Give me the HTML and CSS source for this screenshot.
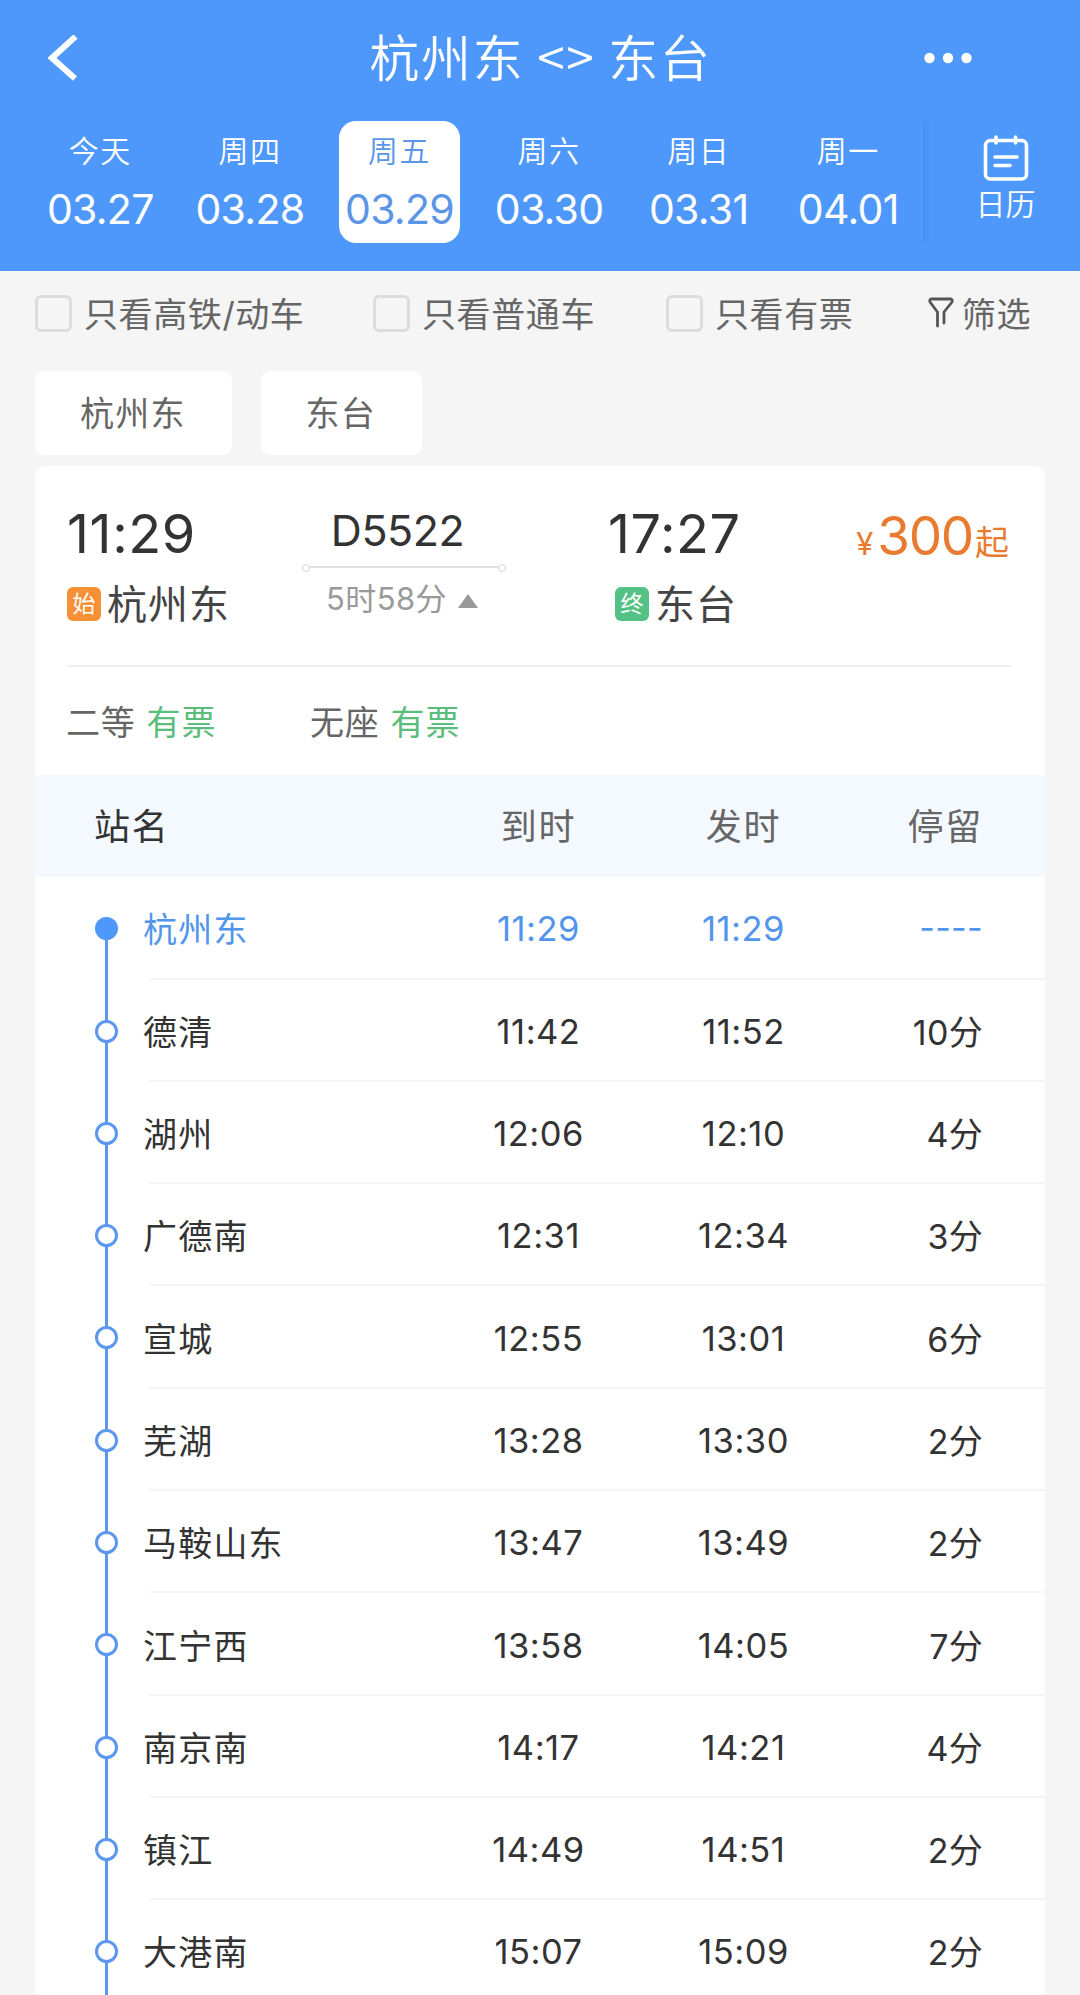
FILE: index.html
```html
<!DOCTYPE html>
<html lang="zh-CN">
<head>
    <meta charset="UTF-8">
    <meta name="viewport" content="width=device-width, initial-scale=1.0">
    <title>杭州东 - 东台</title>
    <link rel="stylesheet" href="styles.css">
</head>
<body>

    <header class="header">
        <div class="nav">
            <svg class="back" width="32" height="46" viewBox="0 0 32 46">
                <path d="M27.5 1.5 L4 23 L27 43.5" fill="none" stroke="#fff" stroke-width="6"/>
            </svg>
            <h1 class="title">杭州东 &lt;&gt; 东台</h1>
            <svg class="more" width="48" height="12" viewBox="0 0 48 12">
                <circle cx="5.5" cy="6" r="5.2" fill="#fff"/>
                <circle cx="24" cy="6" r="5.2" fill="#fff"/>
                <circle cx="42.5" cy="6" r="5.2" fill="#fff"/>
            </svg>
        </div>
        <div class="dates">
            <div class="day"><span class="week">今天</span><span class="date">03.27</span></div>
            <div class="day"><span class="week">周四</span><span class="date">03.28</span></div>
            <div class="day active"><span class="week">周五</span><span class="date">03.29</span></div>
            <div class="day"><span class="week">周六</span><span class="date">03.30</span></div>
            <div class="day"><span class="week">周日</span><span class="date">03.31</span></div>
            <div class="day"><span class="week">周一</span><span class="date">04.01</span></div>
            <div class="calendar">
                <svg width="46" height="46" viewBox="0 0 46 46" fill="none" stroke="#fff" stroke-width="3.6" stroke-linecap="round">
                    <rect x="2.5" y="5.5" width="41" height="38.5" rx="5"/>
                    <path d="M13 2 V8 M32.5 2 V8 M12 22 H34 M12 30.5 H27"/>
                </svg>
                <span>日历</span>
            </div>
        </div>
    </header>

    <div class="filters">
        <label class="check check-fast"><i class="box"></i>只看高铁/动车</label>
        <label class="check check-slow"><i class="box"></i>只看普通车</label>
        <label class="check check-left"><i class="box"></i>只看有票</label>
        <div class="filter">
            <svg width="26" height="31" viewBox="0 0 26 31" fill="none" stroke="#555" stroke-width="2.8" stroke-linejoin="round" stroke-linecap="round">
                <path d="M9.5 29 V15 L2 5 Q1 2 4 2 H22 Q25 2 24 5 L16 15 V26"/>
            </svg>
            <span>筛选</span>
        </div>
    </div>

    <div class="stations">
        <button class="station-btn">杭州东</button>
        <button class="station-btn">东台</button>
    </div>

    <div class="card">
        <div class="train">
            <div class="from">
                <div class="time">11:29</div>
                <div class="place"><span class="tag start">始</span>杭州东</div>
            </div>
            <div class="middle">
                <div class="code">D5522</div>
                <div class="line"></div>
                <div class="duration"><span>5时58分</span><i class="arrow"></i></div>
            </div>
            <div class="to">
                <div class="time">17:27</div>
                <div class="place"><span class="tag end">终</span>东台</div>
            </div>
            <div class="price"><span class="yen">¥</span><span class="amount">300</span><span class="qi">起</span></div>
        </div>
        <div class="seats">
            <div class="seat">二等<span class="has">有票</span></div>
            <div class="seat">无座<span class="has">有票</span></div>
        </div>

        <div class="row table-head">
            <span class="name">站名</span><span>到时</span><span>发时</span><span class="stay">停留</span>
        </div>
        <div class="list">
            <div class="row stop current"><i class="dot"></i><span class="name">杭州东</span><span class="num">11:29</span><span class="num">11:29</span><span class="stay">----</span></div>
            <div class="row stop"><i class="dot"></i><span class="name">德清</span><span class="num">11:42</span><span class="num">11:52</span><span class="stay">10分</span></div>
            <div class="row stop"><i class="dot"></i><span class="name">湖州</span><span class="num">12:06</span><span class="num">12:10</span><span class="stay">4分</span></div>
            <div class="row stop"><i class="dot"></i><span class="name">广德南</span><span class="num">12:31</span><span class="num">12:34</span><span class="stay">3分</span></div>
            <div class="row stop"><i class="dot"></i><span class="name">宣城</span><span class="num">12:55</span><span class="num">13:01</span><span class="stay">6分</span></div>
            <div class="row stop"><i class="dot"></i><span class="name">芜湖</span><span class="num">13:28</span><span class="num">13:30</span><span class="stay">2分</span></div>
            <div class="row stop"><i class="dot"></i><span class="name">马鞍山东</span><span class="num">13:47</span><span class="num">13:49</span><span class="stay">2分</span></div>
            <div class="row stop"><i class="dot"></i><span class="name">江宁西</span><span class="num">13:58</span><span class="num">14:05</span><span class="stay">7分</span></div>
            <div class="row stop"><i class="dot"></i><span class="name">南京南</span><span class="num">14:17</span><span class="num">14:21</span><span class="stay">4分</span></div>
            <div class="row stop"><i class="dot"></i><span class="name">镇江</span><span class="num">14:49</span><span class="num">14:51</span><span class="stay">2分</span></div>
            <div class="row stop"><i class="dot"></i><span class="name">大港南</span><span class="num">15:07</span><span class="num">15:09</span><span class="stay">2分</span></div>
        </div>
    </div>

</body>
</html>
```
FILE: styles.css
```css
* {
    box-sizing: border-box;
}
body {
    margin: 0;
    height: 1995px;
    overflow: hidden;
    background-color: #f5f5f5;
    font-family: Inter, "Noto Sans CJK SC", sans-serif;
    font-size: 34px;
    color: #333;
}
.header {
    height: 270.5px;
    background-color: #4e98fc;
    color: #fff;
}
.nav {
    height: 115px;
    padding: 0 108px 0 48px;
    display: flex;
    align-items: center;
    justify-content: space-between;
}
.title {
    margin: 0 0 5px 77px;
    font-family: "Noto Sans CJK SC", sans-serif;
    font-size: 50px;
    font-weight: 350;
    line-height: 110px;
    letter-spacing: 1.7px;
}
.dates {
    display: flex;
    padding: 6px 0 0 25.5px;
}
.day {
    width: 121px;
    height: 122px;
    margin: 0 14.35px;
    border-radius: 17px;
    display: flex;
    flex-direction: column;
    align-items: center;
}
.day.active {
    background-color: #fff;
    color: #5b95e8;
}
.week {
    margin-top: 8px;
    font-size: 30px;
    font-weight: 350;
    line-height: 44px;
    letter-spacing: 1.5px;
}
.date {
    margin-top: 11px;
    font-size: 41px;
    line-height: 50px;
    letter-spacing: -0.7px;
    white-space: nowrap;
}
.calendar {
    width: 157px;
    height: 122px;
    padding: 14px 0 0 8px;
    background: linear-gradient(to right, #468ff3, #4e98fc 8px);
    display: flex;
    flex-direction: column;
    align-items: center;
    font-size: 30px;
    font-weight: 350;
    line-height: 47px;
}
.filters {
    height: 88px;
    padding: 0 49px 5px 35px;
    display: flex;
    align-items: center;
    color: #666;
    letter-spacing: 0.6px;
}
.check {
    display: flex;
    align-items: center;
    white-space: nowrap;
}
.check-fast {
    width: 338px;
}
.check-slow {
    width: 293px;
}
.box {
    width: 37px;
    height: 37px;
    margin: 3px 12px 0 0;
    border: 3px solid #dcdcdc;
    border-radius: 6px;
}
.filter {
    margin-left: auto;
    display: flex;
    align-items: center;
    gap: 8px;
}
.stations {
    display: flex;
    gap: 29px;
    padding: 12px 35px 11px;
}
.station-btn {
    height: 84px;
    padding: 0 46px 2px 45px;
    border: none;
    border-radius: 9px;
    background-color: #fff;
    color: #666;
    font-family: inherit;
    font-size: 34px;
    letter-spacing: 1.2px;
}
.card {
    width: 1010px;
    margin-left: 35px;
    border-radius: 10px 10px 0 0;
    background-color: #fff;
}
.train {
    height: 201px;
    margin: 0 34px 0 32px;
    padding-top: 35px;
    border-bottom: 2px solid #f0f0f0;
    display: flex;
}
.from {
    width: 234px;
}
.time {
    font-size: 54px;
    line-height: 66px;
    letter-spacing: 0.6px;
}
.place {
    margin-top: 13px;
    display: flex;
    align-items: center;
    gap: 6px;
    font-size: 40px;
    line-height: 50px;
    letter-spacing: 1px;
    color: #444;
}
.tag {
    width: 34px;
    height: 34px;
    margin-bottom: 2px;
    border-radius: 6px;
    color: #fff;
    font-size: 23px;
    line-height: 34px;
    letter-spacing: 0;
    text-align: center;
}
.start {
    background-color: #f59036;
}
.end {
    background-color: #54c186;
}
.middle {
    width: 202px;
    text-align: center;
}
.code {
    margin-right: 9px;
    font-size: 43px;
    line-height: 58px;
    letter-spacing: -0.5px;
}
.line {
    position: relative;
    height: 2px;
    margin: 7px 2px 0 6px;
    background-color: #e2e2e2;
}
.line::before,
.line::after {
    content: "";
    position: absolute;
    top: -2px;
    left: -5px;
    width: 6px;
    height: 6px;
    border: 1.5px solid #d5d5d5;
    border-radius: 50%;
    background-color: #fff;
}
.line::after {
    left: auto;
    right: -5px;
}
.duration {
    margin-top: 9px;
    display: flex;
    align-items: center;
    justify-content: center;
    gap: 11px;
    font-size: 31px;
    line-height: 44px;
    letter-spacing: 0.4px;
    color: #999;
}
.arrow {
    margin-top: 4px;
    border: 10px solid transparent;
    border-top: none;
    border-bottom: 14px solid #999;
}
.to {
    width: 240px;
    padding-left: 105px;
    flex: 1;
}
.to .place {
    padding-left: 7px;
}
.price {
    padding-right: 2px;
    color: #e97b30;
    white-space: nowrap;
    line-height: 70px;
}
.yen {
    font-size: 31px;
}
.amount {
    margin: 0 2px 0 4px;
    font-size: 53px;
    letter-spacing: -1.3px;
}
.seats {
    display: flex;
    height: 108.5px;
    padding-left: 31px;
    line-height: 112px;
    color: #666;
}
.seat {
    width: 244px;
    letter-spacing: 0.8px;
}
.has {
    margin-left: 11px;
    color: #5bbd7c;
}
.row {
    position: relative;
    display: grid;
    grid-template-columns: 294px 205px 205px 137px;
    align-items: center;
    height: 102.3px;
    padding-left: 107px;
    text-align: center;
}
.row .name {
    text-align: left;
}
.row .stay {
    text-align: right;
}
.table-head {
    padding-bottom: 5px;
    background-color: #f4f8ff;
    color: #666;
    font-size: 36px;
    letter-spacing: 1.8px;
}
.table-head .name {
    margin-left: -48px;
    color: #333;
}
.stop .name {
    padding: 0 0 1px 1px;
    letter-spacing: 1.2px;
}
.stop .num {
    padding-top: 1px;
    font-size: 34.5px;
    letter-spacing: 0.5px;
}
.stop .stay {
    padding-bottom: 1px;
    letter-spacing: 0.3px;
}
.stop::before {
    content: "";
    position: absolute;
    top: 0;
    left: 70px;
    width: 3px;
    height: 100%;
    background-color: #5b97ee;
}
.stop:first-child::before {
    top: 50%;
    height: 50%;
}
.stop::after {
    content: "";
    position: absolute;
    right: 0;
    bottom: 0;
    left: 114px;
    height: 2px;
    background-color: #f5f5f5;
}
.dot {
    position: absolute;
    top: 40px;
    left: 60px;
    width: 23px;
    height: 23px;
    border: 3px solid #5b97ee;
    border-radius: 50%;
    background-color: #fff;
}
.current {
    color: #5295ec;
}
.current .dot {
    background-color: #4e98fc;
    border-color: #4e98fc;
}
```
